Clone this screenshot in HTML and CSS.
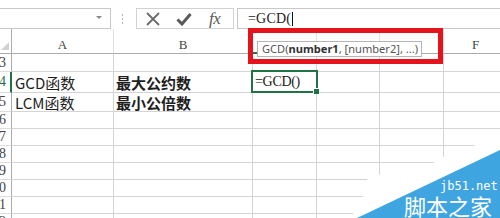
FILE: index.html
```html
<!DOCTYPE html>
<html lang="zh-CN">
<head>
<meta charset="utf-8">
<title>GCD</title>
<link rel="stylesheet" href="styles.css">
</head>
<body>
<div class="app">
  <div class="toolbar">
    <div class="namebox"><span class="dd"></span></div>
    <div class="grip"><i></i><i></i><i></i></div>
    <div class="fxgroup">
      <svg class="ic ic-x" width="16" height="14" viewBox="0 0 16 14"><path d="M2 1 L14 13 M14 1 L2 13" stroke="#6b6b6b" stroke-width="1.8" fill="none"/></svg>
      <svg class="ic ic-ok" width="16" height="14" viewBox="0 0 16 14"><path d="M1.5 7.5 L6 12 L14.5 2" stroke="#5a5a5a" stroke-width="3" fill="none"/></svg>
      <span class="fx">fx</span>
    </div>
    <div class="formula"><span class="ftext">=GCD(</span><span class="caret"></span></div>
  </div>
  <div class="grid">
    <div class="corner"><span class="tri"></span></div>
    <div class="ch">A</div>
    <div class="ch">B</div>
    <div class="ch ch-active"></div>
    <div class="ch"></div>
    <div class="ch"></div>
    <div class="ch">F</div>

    <div class="rh">3</div><div class="c"></div><div class="c"></div><div class="c"></div><div class="c"></div><div class="c"></div><div class="c"></div>
    <div class="rh rh-active">4</div><div class="c t">GCD函数</div><div class="c t b">最大公约数</div><div class="c sel"><span class="ed">=GCD()</span></div><div class="c"></div><div class="c"></div><div class="c"></div>
    <div class="rh">5</div><div class="c t">LCM函数</div><div class="c t b">最小公倍数</div><div class="c"></div><div class="c"></div><div class="c"></div><div class="c"></div>
    <div class="rh">6</div><div class="c"></div><div class="c"></div><div class="c"></div><div class="c"></div><div class="c"></div><div class="c"></div>
    <div class="rh">7</div><div class="c"></div><div class="c"></div><div class="c"></div><div class="c"></div><div class="c"></div><div class="c"></div>
    <div class="rh">8</div><div class="c"></div><div class="c"></div><div class="c"></div><div class="c"></div><div class="c"></div><div class="c"></div>
    <div class="rh">9</div><div class="c"></div><div class="c"></div><div class="c"></div><div class="c"></div><div class="c"></div><div class="c"></div>
    <div class="rh">10</div><div class="c"></div><div class="c"></div><div class="c"></div><div class="c"></div><div class="c"></div><div class="c"></div>
    <div class="rh">11</div><div class="c"></div><div class="c"></div><div class="c"></div><div class="c"></div><div class="c"></div><div class="c"></div>
    <div class="rh">12</div><div class="c"></div><div class="c"></div><div class="c"></div><div class="c"></div><div class="c"></div><div class="c"></div>
  </div>

  <div class="redbox"></div>
  <div class="tip">GCD(<b>number1</b>, [number2], ...)</div>

  <svg class="wm" width="160" height="90" viewBox="340 128 160 90">
    <polygon points="500,136 443,157 433,163 368,177 362,200 350,218 500,218" fill="#ffffff"/>
    <polygon points="500,150 500,218 357,218" fill="#3fa5e0"/>
    <text x="440" y="190" class="wm-en">jb51.net</text>
    <text x="404" y="215" class="wm-cn">脚本之家</text>
  </svg>
</div>
</body>
</html>
```

FILE: styles.css
```css
html, body {
  margin: 0;
  padding: 0;
  background: #ffffff;
}
.app {
  position: relative;
  width: 500px;
  height: 218px;
  overflow: hidden;
  background: #ffffff;
  font-family: "Noto Sans CJK SC", "Noto Sans", sans-serif;
}

/* ---------- toolbar ---------- */
.toolbar {
  height: 29px;
  display: flex;
  align-items: flex-start;
  padding-top: 8px;
  box-sizing: border-box;
  background: #ffffff;
}
.namebox {
  position: relative;
  margin-left: -1px;
  width: 112px;
  height: 21px;
  box-sizing: border-box;
  border: 1px solid #c8c8c8;
  background: #fff;
}
.dd {
  position: absolute;
  right: 8px;
  top: 7px;
  width: 0;
  height: 0;
  border-left: 3px solid transparent;
  border-right: 3px solid transparent;
  border-top: 3px solid #8a8a8a;
}
.grip {
  margin-left: 11px;
  width: 2px;
  padding-top: 6px;
  display: flex;
  flex-direction: column;
  gap: 2px;
}
.grip i {
  display: block;
  width: 1px;
  height: 2px;
  background: #b5b5b5;
}
.fxgroup {
  margin-left: 12px;
  width: 98px;
  height: 21px;
  box-sizing: border-box;
  border: 1px solid #d2d2d2;
  display: flex;
  align-items: center;
  padding-left: 8px;
}
.ic { display: block; }
.ic-ok { margin-left: 15px; }
.fx {
  margin-left: 17px;
  font-family: "Liberation Serif", serif;
  font-style: italic;
  font-size: 17px;
  line-height: 17px;
  color: #5a5a5a;
  letter-spacing: -0.5px;
}
.formula {
  margin-left: 3px;
  flex: 1;
  height: 21px;
  box-sizing: border-box;
  border: 1px solid #c8c8c8;
  border-right: none;
  display: flex;
  align-items: center;
  padding-left: 10px;
}
.ftext {
  font-family: "Liberation Serif", serif;
  font-size: 14px;
  color: #222;
  letter-spacing: 0.2px;
}
.caret {
  display: block;
  width: 1px;
  height: 14px;
  margin-left: 1px;
  background: #111;
}

/* ---------- grid ---------- */
.grid {
  display: grid;
  grid-template-columns: 12px 102px 139px 64px 63px 64px 64px;
  grid-template-rows: 25px 18px 21px 19px 17px 17px 17px 17px 17px 17px 17px;
}
.grid > div {
  box-sizing: border-box;
  border-right: 1px solid #d4d4d4;
  border-bottom: 1px solid #d4d4d4;
}
.corner {
  position: relative;
  border-bottom-color: #ababab !important;
  border-right-color: #ababab !important;
}
.tri {
  position: absolute;
  right: 2px;
  bottom: 3px;
  width: 0;
  height: 0;
  border-left: 8px solid transparent;
  border-bottom: 8px solid #d2d2d2;
}
.ch {
  display: flex;
  align-items: flex-end;
  justify-content: center;
  padding-bottom: 1px;
  font-family: "Liberation Serif", serif;
  font-size: 13px;
  line-height: 14px;
  color: #444;
  border-bottom-color: #ababab !important;
  border-right-color: #e0e0e0 !important;
}
.ch-active {
  border-bottom: 2px solid #217346 !important;
}
.rh {
  display: flex;
  align-items: center;
  justify-content: flex-end;
  padding-right: 5px;
  overflow: hidden;
  font-family: "Liberation Serif", serif;
  font-size: 14px;
  color: #444;
  border-right-color: #ababab !important;
  border-bottom-color: #dcdcdc !important;
  white-space: nowrap;
}
.rh-active {
  color: #217346;
  border-right: 2px solid #217346 !important;
  padding-right: 4px;
}
.c.t {
  display: flex;
  align-items: center;
  padding-left: 3px;
  font-size: 15px;
  color: #1e1e1e;
  white-space: nowrap;
}
.c.b { font-weight: bold; padding-left: 2px; }
.sel {
  position: relative;
  display: flex;
  align-items: center;
}
.sel::after {
  content: "";
  position: absolute;
  left: -2px;
  top: -2px;
  width: 67px;
  height: 23px;
  box-sizing: border-box;
  border: 2px solid #217346;
}
.sel::before {
  content: "";
  position: absolute;
  right: -3px;
  bottom: -2px;
  width: 5px;
  height: 5px;
  background: #217346;
  border-left: 1px solid #fff;
  border-top: 1px solid #fff;
  z-index: 2;
}
.ed {
  padding-left: 2px;
  font-family: "Liberation Serif", serif;
  font-size: 14px;
  color: #1a1a1a;
  letter-spacing: -0.3px;
}

/* ---------- overlays ---------- */
.redbox {
  position: absolute;
  left: 248px;
  top: 28px;
  width: 195px;
  height: 36px;
  box-sizing: border-box;
  border: 5px solid #e5131b;
}
.tip {
  position: absolute;
  left: 257px;
  top: 41px;
  width: 165px;
  height: 16px;
  box-sizing: border-box;
  border: 1px solid #b4b4b4;
  background: #fff;
  padding-left: 4px;
  font-family: "Noto Sans", sans-serif;
  font-size: 11.1px;
  line-height: 14px;
  color: #555;
  white-space: nowrap;
}
.tip b { color: #333; }
.wm {
  position: absolute;
  right: 0;
  bottom: 0;
}
.wm-en {
  font-family: "DejaVu Sans Mono", monospace;
  font-size: 12px;
  fill: #ffffff;
}
.wm-cn {
  font-family: "Noto Sans CJK SC", sans-serif;
  font-size: 22px;
  fill: #ffffff;
}
```
